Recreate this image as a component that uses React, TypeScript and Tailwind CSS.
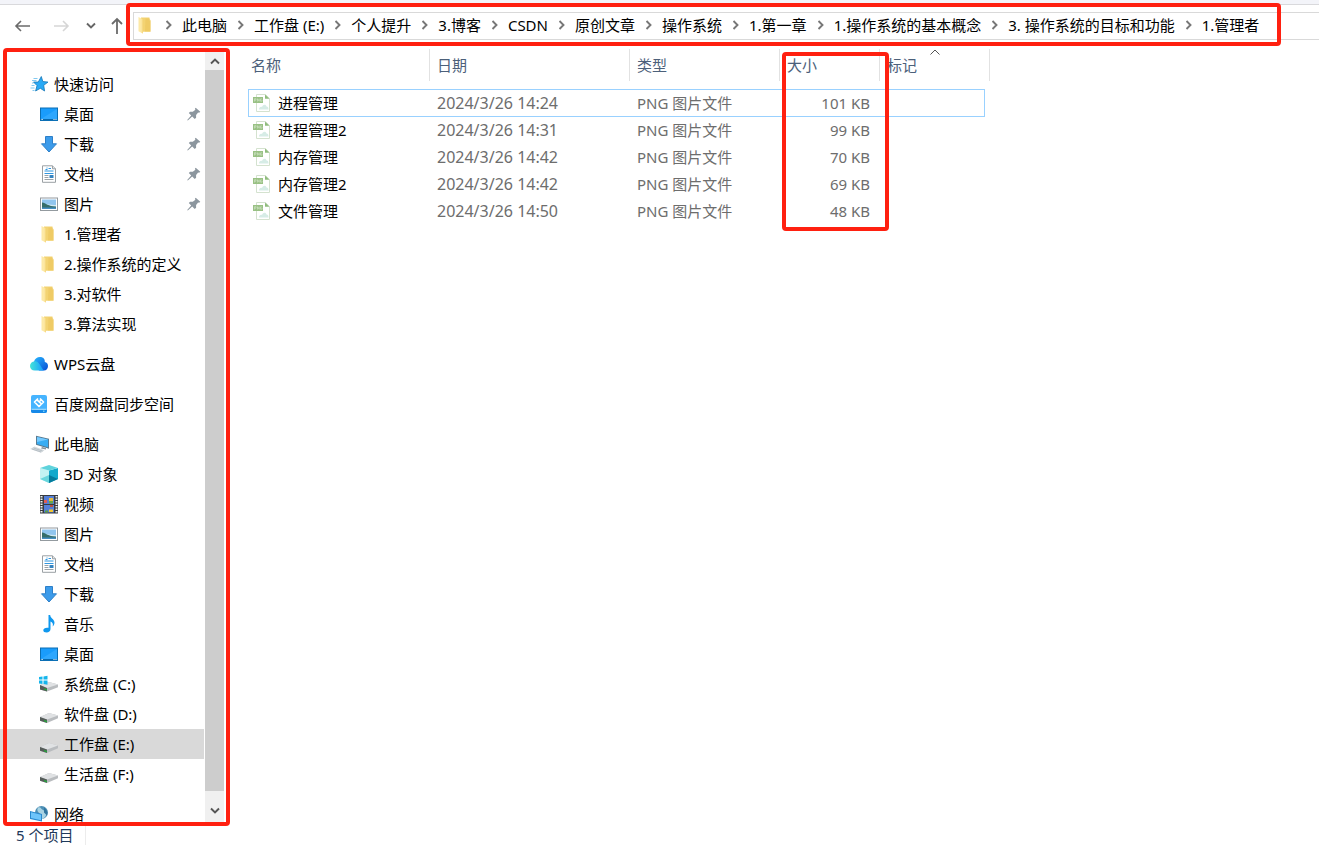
import React, { ReactNode } from "react";

type IconProps = { className?: string };
const base = "h-[18px] w-[18px] shrink-0 overflow-visible";

const Folder = () => (
  <svg viewBox="0 0 18 18" className={base}>
    <path d="M4 1.500h8.500v3h1v11.300H4z" fill="#f3d372" />
    <path d="M8.500 2.500h4l1 2v11H8z" fill="#edc65e" opacity=".65" />
    <path d="M1.500 1l4.300 2.200v14.300l-4.300-2.200z" fill="#fde9a6" />
    <path d="M5.800 3.200v14.300l-1-.5V2.700z" fill="#f5d67b" />
  </svg>
);

const Star = () => (
  <svg viewBox="0 0 18 18" className={base}>
    <path d="M11.300 1.500l1.500 5 5.200.6-4.300 3.200.9 5.700-4.300-2.700-4.700 2.700 1.400-5.400L3.500 7h4.800z" fill="#29a9f5" stroke="#1577b8" strokeWidth=".8" strokeLinejoin="round" />
    <path d="M3.500 3.500h4M2 5.500h4.500M2 8h1.500M1.500 10.500h3M.5 13h4M2.500 15.500h2" stroke="#74c3ee" strokeWidth=".9" />
  </svg>
);

const Desktop = () => (
  <svg viewBox="0 0 18 18" className={base}>
    <rect x=".5" y="3" width="17" height="12.500" fill="#1a9cfb" stroke="#0b6fb5" />
    <path d="M1 14L17 4v10z" fill="#42b1ff" opacity=".55" />
    <path d="M1 14.500h16" stroke="#0869ad" />
    <path d="M1.500 14.500h1.200M13.500 14.500h1M15.500 14.500h1" stroke="#fff" />
  </svg>
);

const Download = () => (
  <svg viewBox="0 0 18 18" className={base}>
    <path d="M5.500 1.500h7v7.300h4L9 17 1.500 8.800h4z" fill="#3c9bea" stroke="#2d7fc8" strokeLinejoin="round" />
  </svg>
);

const Doc = () => (
  <svg viewBox="0 0 18 18" className={base}>
    <path d="M2.500.8h10l3 3v13.500h-13z" fill="#fff" stroke="#9aa0a4" />
    <path d="M12.500.8v3h3" fill="#dfe3e5" stroke="#9aa0a4" />
    <path d="M6.500 3h1M5.500 4.500h2M8.500 3.500h2.500M4.500 6h9M4.500 8.500h9" stroke="#2f96e0" />
    <path d="M4.500 10.500h4M4.500 12.500h4M4.500 14.500h9" stroke="#9aa2a8" />
    <path d="M9.500 10h4v3h-4z" fill="#3684c0" />
  </svg>
);

const Picture = () => (
  <svg viewBox="0 0 18 18" className={base}>
    <rect x=".5" y="3" width="17" height="12.500" fill="#fff" stroke="#939a9f" />
    <path d="M2 4.500h14v9.500H2z" fill="#91c5ee" />
    <path d="M2 9c3-1 8 1.500 14 1v2H2z" fill="#d3e8f1" />
    <path d="M2 7.500c4 .5 6 4 14 4V14H2z" fill="#356d6a" />
    <path d="M2 12.500h14V14H2z" fill="#458dc1" />
  </svg>
);

const Cloud = () => (
  <svg viewBox="0 0 18 18" className={base}>
    <defs>
      <linearGradient id="cloudL"><stop stopColor="#43e4d8" /><stop offset="1" stopColor="#159bff" /></linearGradient>
      <linearGradient id="cloudR" x1="0" y1="0" x2="1" y2="1"><stop stopColor="#28b7ff" /><stop offset="1" stopColor="#064bd3" /></linearGradient>
    </defs>
    <path d="M10 2c3.500 0 5 2.300 4.800 5 2 .2 3.200 1.800 3.200 4 0 2.500-1.600 4.500-4 4.500H9L4 6.500C5 3.500 7 2 10 2z" fill="url(#cloudR)" />
    <path d="M4.800 6.200c4-.5 5 4 9 9.300h-9C1.800 15.500 0 13.500 0 11c0-2.600 1.800-4.500 4.800-4.800z" fill="url(#cloudL)" />
  </svg>
);

const Baidu = () => (
  <svg viewBox="0 0 18 18" className={base}>
    <rect x="1" width="16" height="18" rx="2" fill="#46b4ff" />
    <path d="M1 14.500h16V16a2 2 0 0 1-2 2H3a2 2 0 0 1-2-2z" fill="#1689e8" />
    <path d="M1.500 14.300h15" stroke="#d4f4ff" strokeWidth=".8" />
    <path d="M8 3.500L4.500 7 9 11.500l2-2M10 3.500L13.500 7l-2 2L7 4.800M9 7l2-2" fill="none" stroke="#fff" strokeWidth="1.700" strokeLinejoin="round" />
    <path d="M13 16.200h1.500" stroke="#9bf0ff" />
  </svg>
);

const Computer = () => (
  <svg viewBox="0 0 18 18" className={base}>
    <path d="M6 .7l13 3v10L6 9.800z" fill="#587a91" />
    <path d="M7 2l11 2.600v7.700L7 9z" fill="#38adf3" />
    <path d="M7 2l11 2.600L7 7z" fill="#75caff" />
    <path d="M12 12l4 1v1.500l-5-1z" fill="#87949c" />
    <path d="M0 14L4.500 11.500l10 3.800-3.500 2.400z" fill="#d4dade" />
    <path d="M2 14l9 3M3.500 13l9 3" stroke="#a5afb5" strokeWidth=".6" />
  </svg>
);

const Cube = () => (
  <svg viewBox="0 0 18 18" className={base}>
    <path d="M0 3l9 2.500V18l-9-4z" fill="#c3f3f3" />
    <path d="M9 5.500L18 3v11l-9 4z" fill="#12a9cc" />
    <path d="M0 3l9-3 9 3-9 2.500z" fill="#5fd3dc" />
    <path d="M9 10l9 4-9 4z" fill="#057c9d" />
    <path d="M0 14l9-4v8z" fill="#6ad7dd" />
  </svg>
);

const Film = () => (
  <svg viewBox="0 0 18 18" className={base}>
    <path d="M0 0h18v18.500H0z" fill="#383b3e" />
    <path d="M4 1h10v8H4zM4 10h10v7.500H4z" fill="#547fd8" />
    <path d="M1.500 1v17M16.500 1v17" stroke="#eef1f2" strokeWidth="2" strokeDasharray="1.500 1" />
    <path d="M9 3h4v3H9z" fill="#e7b83c" />
    <path d="M4 5h3v3H4z" fill="#df5c54" />
    <path d="M9 6h4v2.500H9z" fill="#68a843" />
    <path d="M9 14.500h4v2.500H9z" fill="#f2c735" />
    <path d="M10 10h3v2h-3z" fill="#bd513d" />
    <path d="M5 15.500h3v2H5z" fill="#5a9d48" />
  </svg>
);

const Music = () => (
  <svg viewBox="0 0 18 18" className={base}>
    <path d="M8.500 0h1.700c.1 3.300 4.300 4 4.300 7.800 0 1.500-.8 2.800-1.800 3.600.7-2.700-.3-4-2.200-4.800V14c0 2-1.700 3.500-4 3.500-2 0-3.200-1-3.200-2.300 0-1.800 2.400-3 5.200-2.400z" fill="#0f98ee" />
  </svg>
);

const Drive = () => (
  <svg viewBox="0 0 18 18" className={base}>
    <path d="M0 12l9-4 9 2.500v2.800L7 18l-7-2.200z" fill="#b9bcbf" />
    <path d="M0 12l9-4 9 2.500-11 4z" fill="#e0e2e4" />
    <path d="M0 12l7 2.500V18l-7-2.200z" fill="#565d5a" />
    <path d="M4 14.900l3 1v1.300l-3-1z" fill="#1eae36" />
  </svg>
);

const SystemDrive = () => (
  <svg viewBox="0 0 18 18" className={base}>
    <path d="M0 10l9-3 9 2.500v2.800L7 16.500l-7-2z" fill="#b9bcbf" />
    <path d="M0 10l9-3 9 2.500-11 3.500z" fill="#e0e2e4" />
    <path d="M0 10l7 3v3.500l-7-2z" fill="#565d5a" />
    <path d="M4 13.200l3 1v1.300l-3-1z" fill="#1eae36" />
    <path d="M-1 2l3.500-.5v3H-1zM3.500 1.400L7.500.8v3.700h-4zM-1 5.500h3.500V9L-1 8.500zM3.500 5.500h4v4.200l-4-.6z" fill="#15b5ec" />
  </svg>
);

const Network = () => (
  <svg viewBox="0 0 18 18" className={base}>
    <circle cx="11.500" cy="7.500" r="6.500" fill="#4d8fb5" />
    <path d="M8 2.500c3-1 3 2 5 2.500s1 3 3.500 3c0 3-2 5-4 6-2-1 0-3-2-5-3-2-4-4-2.500-6.500z" fill="#a9d3e3" />
    <path d="M14 2.500c3 2 4 5 3 8l-3-3z" fill="#32759f" />
    <path d="M0 6l12 3v7.500L0 14z" fill="#2889cf" />
    <path d="M1 7.200l10 2.500v5.500L1 13z" fill="#6dc4fa" />
  </svg>
);

const PngFile = () => (
  <svg viewBox="0 0 18 18" className={base}>
    <path d="M3.500.5h9l4 4v13h-13z" fill="#fff" stroke="#d4e2cf" />
    <path d="M12 .5v4.300h4.500z" fill="#8fbc7c" />
    <path d="M6 15.500c0-2 1.500-3 3-2.500 1-3 4-3 4.500-.5 1.500 0 2 1.200 2 3z" fill="#d6ece6" />
    <path d="M0 3h10v6H0z" fill="#99c184" />
    <path d="M1.500 7.500V4.700H3v1.500H1.500M4.500 7.500V4.700l1.700 2.500V4.700M9 4.900H7.500v2.300H9V6" fill="none" stroke="#cfe3c4" strokeWidth=".7" />
  </svg>
);

const Pin = () => (
  <svg viewBox="0 0 14 14" className="h-[14px] w-[14px] shrink-0">
    <path d="M8.700.7l4.600 4-1.200 1.100-1-.2-2 2.500v2.700l-1.400 1.100-2.500-2.500L.8 13.500.2 13l4-4.500L1.800 6l1.300-1.300h2.700l2.600-2-.5-1z" fill="#8c969e" />
  </svg>
);

const Chevron = ({ className = "" }: IconProps) => (
  <svg viewBox="0 0 10 10" className={`h-[10px] w-[10px] shrink-0 ${className}`}>
    <path d="M1 2.500l4 4 4-4" fill="none" stroke="currentColor" strokeWidth="1.900" />
  </svg>
);

type Node = { label: string; icon: () => ReactNode; pinned?: boolean; selected?: boolean };
type Group = { root: Node; children: Node[] };

const groups: Group[] = [
  {
    root: { label: "快速访问", icon: Star },
    children: [
      { label: "桌面", icon: Desktop, pinned: true },
      { label: "下载", icon: Download, pinned: true },
      { label: "文档", icon: Doc, pinned: true },
      { label: "图片", icon: Picture, pinned: true },
      { label: "1.管理者", icon: Folder },
      { label: "2.操作系统的定义", icon: Folder },
      { label: "3.对软件", icon: Folder },
      { label: "3.算法实现", icon: Folder },
    ],
  },
  { root: { label: "WPS云盘", icon: Cloud }, children: [] },
  { root: { label: "百度网盘同步空间", icon: Baidu }, children: [] },
  {
    root: { label: "此电脑", icon: Computer },
    children: [
      { label: "3D 对象", icon: Cube },
      { label: "视频", icon: Film },
      { label: "图片", icon: Picture },
      { label: "文档", icon: Doc },
      { label: "下载", icon: Download },
      { label: "音乐", icon: Music },
      { label: "桌面", icon: Desktop },
      { label: "系统盘 (C:)", icon: SystemDrive },
      { label: "软件盘 (D:)", icon: Drive },
      { label: "工作盘 (E:)", icon: Drive, selected: true },
      { label: "生活盘 (F:)", icon: Drive },
    ],
  },
  { root: { label: "网络", icon: Network }, children: [] },
];

const crumbs = ["此电脑", "工作盘 (E:)", "个人提升", "3.博客", "CSDN", "原创文章", "操作系统", "1.第一章", "1.操作系统的基本概念", "3. 操作系统的目标和功能", "1.管理者"];

const files = [
  { name: "进程管理", date: "2024/3/26 14:24", size: "101 KB" },
  { name: "进程管理2", date: "2024/3/26 14:31", size: "99 KB" },
  { name: "内存管理", date: "2024/3/26 14:42", size: "70 KB" },
  { name: "内存管理2", date: "2024/3/26 14:42", size: "69 KB" },
  { name: "文件管理", date: "2024/3/26 14:50", size: "48 KB" },
];

const Highlight = ({ className }: { className: string }) => (
  <div aria-hidden="true" className={`pointer-events-none absolute z-10 rounded-sm border-4 border-[#ff2010] ${className}`} />
);

function TreeRow({ node, root = false }: { node: Node; root?: boolean }) {
  const Icon = node.icon;
  return (
    <button type="button" className={`flex h-[30px] w-full shrink-0 items-center gap-1.5 pr-[3px] text-left leading-4 whitespace-nowrap ${root ? "pl-[30px]" : "pl-10"} ${node.selected ? "bg-[#d9d9d9]" : ""}`}>
      <Icon />
      <span className="flex-1">{node.label}</span>
      {node.pinned && <Pin />}
    </button>
  );
}

function NavBar() {
  return (
    <header className="flex h-11 shrink-0 items-start pt-[7px]">
      <div className="flex h-7 w-[133px] shrink-0 items-center pl-[14px] text-[#666]">
        <button type="button" aria-label="后退" className="w-[38px]">
          <svg viewBox="0 0 18 14" className="h-[14px] w-[18px]"><path d="M16 7H2M7 2L2 7l5 5" fill="none" stroke="#6b6b6b" strokeWidth="1.600" /></svg>
        </button>
        <button type="button" aria-label="前进" className="w-[34px]" disabled>
          <svg viewBox="0 0 18 14" className="h-[14px] w-[18px]"><path d="M2 7h14M11 2l5 5-5 5" fill="none" stroke="#d6d6d6" strokeWidth="1.600" /></svg>
        </button>
        <button type="button" aria-label="最近浏览的位置" className="w-6"><Chevron /></button>
        <button type="button" aria-label="向上">
          <svg viewBox="0 0 14 18" className="h-[18px] w-[14px]"><path d="M7 17V2M2 7l5-5 5 5" fill="none" stroke="#6b6b6b" strokeWidth="1.800" /></svg>
        </button>
      </div>
      <div className="relative min-w-0 flex-1">
        <nav aria-label="地址" className="flex h-7 items-center border border-r-0 border-[#d9d9d9] pb-0.5 pl-[3px] whitespace-nowrap">
          <Folder />
          {crumbs.map((c) => (
            <React.Fragment key={c}>
              <Chevron className="mr-2 ml-[9px] -rotate-90 text-[#777]" />
              <button type="button">{c}</button>
            </React.Fragment>
          ))}
        </nav>
        <Highlight className="-top-[9px] right-[38px] -bottom-1.5 -left-[7px]" />
      </div>
    </header>
  );
}

function Sidebar() {
  return (
    <aside className="relative w-[230px] shrink-0">
      <div className="flex h-full pr-1.5">
        <div className="flex min-w-0 flex-1 flex-col gap-2.5 overflow-hidden pt-5">
          {groups.map((g) => (
            <div key={g.root.label} className="shrink-0">
              <TreeRow node={g.root} root />
              {g.children.map((n) => <TreeRow key={n.label} node={n} />)}
            </div>
          ))}
        </div>
        <div className="ml-px flex w-[19px] shrink-0 flex-col bg-[#f0f0f0] pt-[3px] text-[#555]">
          <button type="button" aria-label="向上滚动" className="flex h-[18px] items-start justify-center pt-1"><Chevron className="rotate-180" /></button>
          <div className="flex-1 bg-[#cdcdcd]" />
          <button type="button" aria-label="向下滚动" className="flex h-[31px] items-center justify-center pt-2"><Chevron /></button>
        </div>
      </div>
      <Highlight className="-top-px right-0 -bottom-1 left-[3px]" />
    </aside>
  );
}

const headCell = "relative p-0 text-left align-top font-normal";
const headInner = "flex h-8 items-center border-r border-[#e2e2e2]";

function FileTable() {
  return (
    <main className="min-w-0 flex-1 pl-[18px]">
      <div className="relative w-fit">
        <table className="w-[742px] table-fixed border-separate border-spacing-0 whitespace-nowrap">
          <colgroup>
            <col className="w-[182px]" />
            <col className="w-[200px]" />
            <col className="w-[150px]" />
            <col className="w-[100px]" />
            <col className="w-[105px]" />
            <col className="w-[5px]" />
          </colgroup>
          <thead>
            <tr className="h-10 text-[#4c607a]">
              <th className={headCell}><div className={`${headInner} pl-[3px]`}>名称</div></th>
              <th className={headCell}><div className={`${headInner} pl-[7px]`}>日期</div></th>
              <th className={headCell}><div className={`${headInner} pl-[7px]`}>类型</div></th>
              <th className={headCell}><div className={`${headInner} pl-[7px]`}>大小</div></th>
              <th colSpan={2} className={headCell}>
                <div className={`${headInner} pl-[7px]`}>标记</div>
                <svg viewBox="0 0 10 6" className="absolute top-0 left-1/2 h-1.5 w-2.5 -translate-x-1/2"><path d="M.5 5.500L5 1l4.500 4.500" fill="none" stroke="#555" /></svg>
              </th>
            </tr>
          </thead>
          <tbody>
            {files.map((f, i) => {
              const edge = i === 0 ? "border-y border-[#99d1ff]" : "pb-0.5";
              return (
                <tr key={f.name} className={`text-[#6d6d6d] ${i === 0 ? "h-7" : "h-[27px]"}`}>
                  <td className={`pt-0 pr-0 text-black ${edge} ${i === 0 ? "border-l pl-1" : "pl-[5px]"}`}>
                    <div className="flex items-center gap-[7px]"><PngFile />{f.name}</div>
                  </td>
                  <td className={`pt-0 pr-0 pl-[7px] text-base leading-5 ${edge}`}>{f.date}</td>
                  <td className={`pt-0 pr-0 pl-[7px] ${edge}`}>PNG 图片文件</td>
                  <td className={`pt-0 pr-2.5 pl-0 text-right ${edge}`}>{f.size}</td>
                  <td className={`px-0 pt-0 ${edge} ${i === 0 ? "border-r" : ""}`} />
                </tr>
              );
            })}
          </tbody>
        </table>
        <Highlight className="top-[3px] -bottom-1.5 left-[534px] w-[107px]" />
      </div>
    </main>
  );
}

export default function App() {
  return (
    <div className="flex h-screen flex-col overflow-hidden bg-white font-['Noto_Sans','Noto_Sans_CJK_SC',sans-serif] text-[15px] leading-5 text-black">
      <div className="h-[5px] shrink-0 border-b border-[#d9d9dc] bg-[#f3f4f9]" />
      <NavBar />
      <div className="flex min-h-0 flex-1">
        <Sidebar />
        <FileTable />
      </div>
      <footer className="flex h-[27px] shrink-0 items-center pb-0.5 pl-4 text-[#1e395b]">
        <span className="border-r border-[#ececec] pr-3">5 个项目</span>
      </footer>
    </div>
  );
}
